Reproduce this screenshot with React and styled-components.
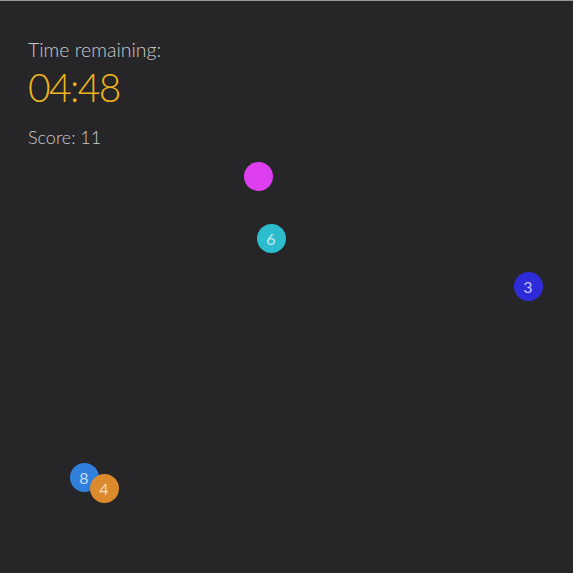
import styled, { createGlobalStyle } from "styled-components";

const GlobalStyle = createGlobalStyle`
  html, body {
    margin: 0;
    padding: 0;
    background: #262628;
  }
  body {
    font-family: "Lato", "Open Sans", sans-serif;
  }
`;

const balls = [
  { id: 1, x: 258, y: 175, color: "#dd3ff0", label: "" },
  { id: 2, x: 271, y: 237, color: "#2cbccd", label: "6" },
  { id: 3, x: 528, y: 285, color: "#2e2bd9", label: "3" },
  { id: 4, x: 84, y: 476, color: "#2f7fdb", label: "8" },
  { id: 5, x: 104, y: 487, color: "#dc8b2c", label: "4" },
];

const Board = styled.div`
  position: relative;
  width: 573px;
  height: 573px;
  box-sizing: border-box;
  border-top: 1px solid #9a9a9a;
  background: #262628;
  overflow: hidden;
`;

const Hud = styled.div`
  display: flex;
  flex-direction: column;
  padding: 38px 0 0 28px;
`;

const Label = styled.div`
  font-size: 19.5px;
  font-weight: 300;
  color: #c9c9cb;
  line-height: 22px;
`;

const Timer = styled.div`
  font-size: 39px;
  font-weight: 300;
  color: #f0b31b;
  line-height: 46px;
  margin-top: 3px;
  letter-spacing: -1.6px;
`;

const Score = styled.div`
  font-size: 18px;
  font-weight: 300;
  color: #c9c9cb;
  margin-top: 15px;
  line-height: 24px;
`;

const Ball = styled.div`
  position: absolute;
  width: 29px;
  height: 29px;
  margin: -14.5px 0 0 -14.5px;
  border-radius: 50%;
  background: ${(p) => p.$color};
  display: flex;
  align-items: center;
  justify-content: center;
  font-size: 16px;
  font-weight: 400;
  color: rgba(255, 255, 255, 0.72);
`;

function App() {
  return (
    <>
      <GlobalStyle />
      <Board>
        <Hud>
          <Label>Time remaining:</Label>
          <Timer>04:48</Timer>
          <Score>Score: 11</Score>
        </Hud>
        {balls.map((b) => (
          <Ball key={b.id} $color={b.color} style={{ left: b.x, top: b.y }}>
            {b.label}
          </Ball>
        ))}
      </Board>
    </>
  );
}

export default App;
